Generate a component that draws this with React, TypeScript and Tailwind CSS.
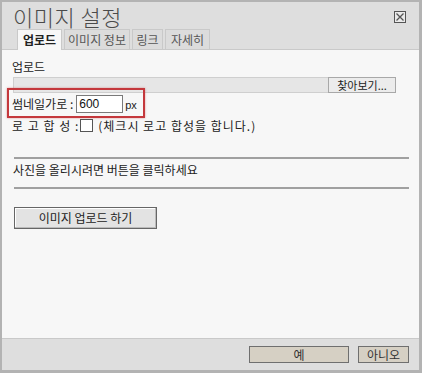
import React from "react";

const F = { fontFamily: '"Noto Sans CJK KR", "Noto Sans", sans-serif' };

export default function App() {
  return (
    <div className="w-[422px] h-[373px] bg-[#b3b3b3] pt-[2px] pl-[2px] pr-[3px] pb-[3px]" style={F}>
      <div className="w-full h-full flex flex-col bg-[#f7f7f7]">
        {/* header */}
        <div className="h-[48px] bg-[#dedede] border-b border-[#c9c9c9] flex flex-col relative">
          <div className="pl-[11px] pt-[1px] h-[27px] text-[22px] leading-[27px] text-[#4a4a4a] tracking-[0.5px] font-light whitespace-nowrap">
            이미지 설정
          </div>
          <div className="absolute right-[13px] top-[9px] w-[12px] h-[12px] border border-[#555] bg-[#eaeaea] flex items-center justify-center">
            <svg width="10" height="10" viewBox="0 0 10 10">
              <path d="M1.5 1.5 L8.5 8.5 M8.5 1.5 L1.5 8.5" stroke="#555" strokeWidth="1.3" />
            </svg>
          </div>
          <div className="flex pl-[15px] gap-[2px] mt-auto -mb-px">
            <div className="h-[21px] w-[45px] bg-[#f7f7f7] border border-b-0 border-[#c9c9c9] text-[12px] leading-[20px] font-bold text-[#222] text-center whitespace-nowrap">
              업로드
            </div>
            <div className="h-[21px] w-[66px] bg-[#dcdcdc] border border-[#c9c9c9] text-[12px] leading-[20px] text-[#555] text-center whitespace-nowrap">
              이미지 정보
            </div>
            <div className="h-[21px] w-[31px] bg-[#dcdcdc] border border-[#c9c9c9] text-[12px] leading-[20px] text-[#555] text-center whitespace-nowrap">
              링크
            </div>
            <div className="h-[21px] w-[45px] bg-[#dcdcdc] border border-[#c9c9c9] text-[12px] leading-[20px] text-[#555] text-center whitespace-nowrap">
              자세히
            </div>
          </div>
        </div>

        {/* content */}
        <div className="flex-1 flex flex-col pl-[10px] pr-[10px] text-[12px] text-[#222]">
          <div className="mt-[9px] h-[15px] leading-[15px]">업로드</div>
          <div className="mt-[3px] ml-[1px] mr-[13px] h-[16px] bg-[#e6e6e6] border border-[#cfcfcf] flex justify-end">
            <div className="w-[68px] h-[16px] -mt-px -mr-px bg-[#ececec] border border-[#a8a8a8] text-[11px] leading-[14px] text-center text-[#222] whitespace-nowrap">
              찾아보기...
            </div>
          </div>
          <div className="-ml-[5px] -mt-[5px] w-[138px] h-[30px] border-2 border-[#c4383c] shadow-[0_0_2px_rgba(196,56,60,0.5)] flex items-center pl-[3px] pt-[1px]">
            <span className="leading-[14px] whitespace-nowrap">썸네일가로 :</span>
            <div className="ml-[3px] w-[47px] h-[18px] bg-white border border-[#7a7a7a] text-[12px] leading-[16px] pl-[2px] text-[#111]" style={{ fontFamily: '"Liberation Sans", sans-serif' }}>
              600
            </div>
            <span className="ml-[2px] text-[11px] leading-[14px] mt-[2px]" style={{ fontFamily: '"Liberation Sans", sans-serif' }}>
              px
            </span>
          </div>
          <div className="flex items-center mt-[1px] h-[13px]">
            <span className="tracking-[1px] whitespace-nowrap leading-[13px]">로 고 합 성 :</span>
            <div className="ml-[1px] w-[13px] h-[13px] bg-white border border-[#555]" />
            <span className="ml-[5px] tracking-[1px] whitespace-nowrap leading-[13px]">(체크시 로고 합성을 합니다.)</span>
          </div>
          <div className="mt-[25px] ml-[2px] h-[2px] bg-[#a0a0a0]" />
          <div className="mt-[4px] ml-[1px] h-[14px] leading-[14px] whitespace-nowrap">사진을 올리시려면 버튼을 클릭하세요</div>
          <div className="mt-[10px] ml-[2px] h-[2px] bg-[#a0a0a0]" />
          <div className="mt-[18px] ml-[2px] w-[143px] h-[22px] bg-[#e3e3e3] border border-[#666] shadow-[inset_-1px_-1px_0_#bbb,inset_1px_1px_0_#fff] text-[12px] leading-[20px] text-center text-[#222] whitespace-nowrap">
            이미지 업로드 하기
          </div>
        </div>

        {/* footer */}
        <div className="h-[32px] bg-[#dedede] border-t border-[#c9c9c9] flex items-start justify-end pr-[10px] pt-[7px] gap-[9px]">
          <div className="w-[100px] h-[17px] bg-[#d6d0c4] border border-[#6f6f6f] text-[12px] leading-[15px] text-center text-[#333]">
            예
          </div>
          <div className="w-[51px] h-[17px] bg-[#d6d0c4] border border-[#6f6f6f] text-[12px] leading-[15px] text-center text-[#333] whitespace-nowrap">
            아니오
          </div>
        </div>
      </div>
    </div>
  );
}
